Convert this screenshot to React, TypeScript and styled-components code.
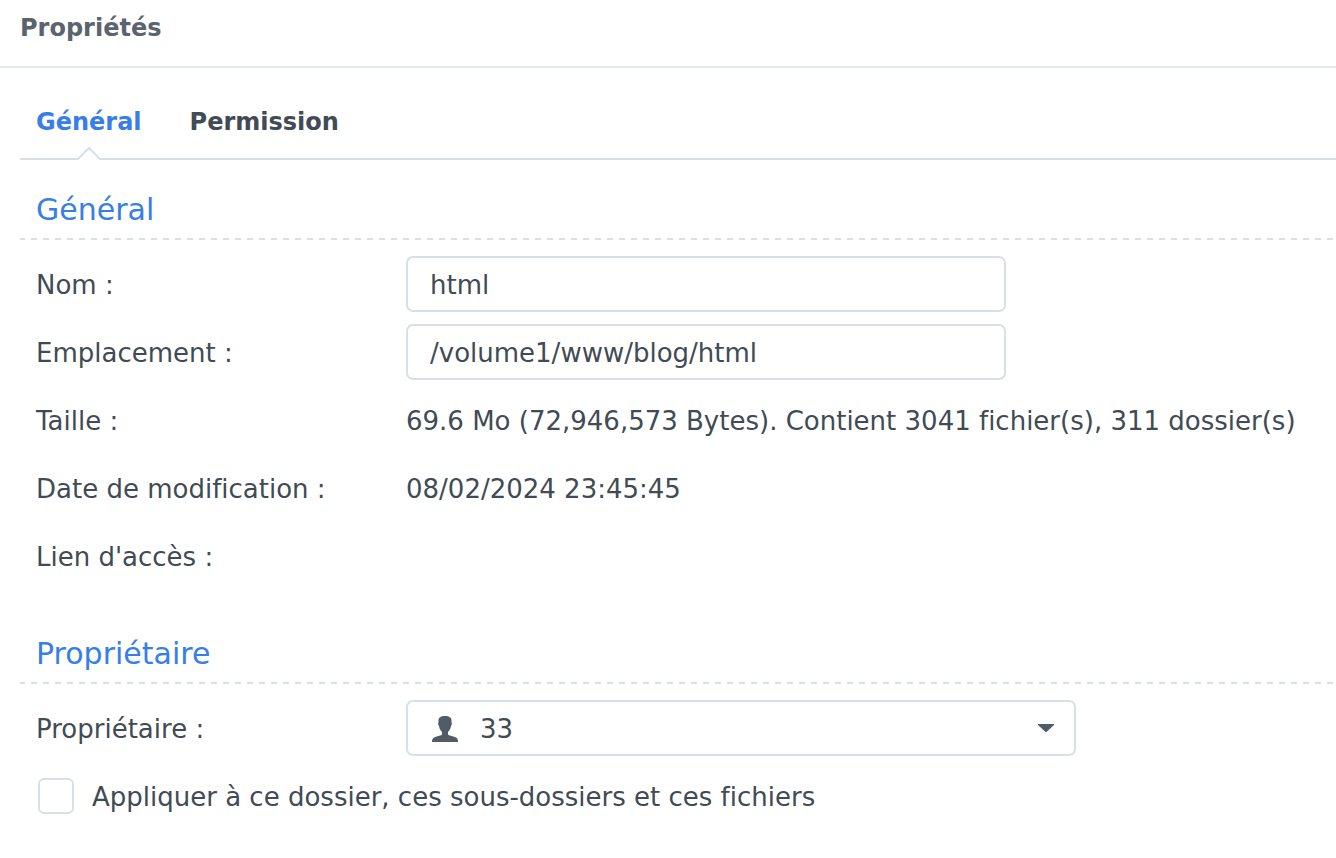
import React, { useState } from 'react';
import styled, { createGlobalStyle } from 'styled-components';

const GlobalStyle = createGlobalStyle`
  *, *::before, *::after { box-sizing: border-box; }
  body {
    margin: 0;
    background: #fff;
    color: #414b55;
    font: 26px/58px Verdana, "DejaVu Sans", sans-serif;
    font-variant-ligatures: none;
    overflow-x: hidden;
  }
`;

const Header = styled.header`
  padding: 8px 20px 18px;
  border-bottom: 2px solid #e3e8ef;
`;

const Title = styled.h1`
  margin: 0;
  font-size: 24px;
  line-height: 40px;
  font-weight: bold;
  color: #5b646e;
`;

const Content = styled.main`
  padding: 24px 0 24px 20px;
`;

const TabBar = styled.div`
  display: flex;
  gap: 48px;
  padding: 0 16px;
  border-bottom: 2px solid #d8dfe9;
`;

const Tab = styled.button<{ $active: boolean }>`
  position: relative;
  display: block;
  padding: 0 0 6px;
  border: 0;
  background: none;
  font: bold 24px/60px Verdana, "DejaVu Sans", sans-serif;
  color: ${({ $active }) => ($active ? '#377ee7' : '#414b55')};
  cursor: pointer;
`;

const Pointer = styled.svg`
  position: absolute;
  left: 50%;
  bottom: -2px;
  width: 26px;
  height: 14px;
  margin-left: -13px;
`;

const Section = styled.section`
  padding-top: 30px;

  & + & { padding-top: 48px; }
`;

const SectionTitle = styled.h2`
  margin: 0 0 16px;
  padding: 0 16px 10px;
  font-size: 30px;
  line-height: 40px;
  font-weight: normal;
  color: #377ee7;
  background: repeating-linear-gradient(to right, #d8dfe9 0 6px, transparent 6px 12px) -1px 100% / 2400px 2px no-repeat;
`;

const Rows = styled.div`
  display: grid;
  gap: 10px;
  padding-left: 16px;
`;

const Row = styled.div`
  display: grid;
  grid-template-columns: 370px minmax(0, 1fr);
  min-height: 58px;
`;

const Value = styled.output`
  display: block;
  white-space: nowrap;
`;

const TextInput = styled.input`
  width: 100%;
  max-width: 600px;
  height: 56px;
  padding: 2px 22px 0;
  border: 2px solid #d8dfe9;
  border-radius: 7px;
  outline: 0;
  background: #fff;
  font: inherit;
  line-height: 50px;
  color: inherit;
`;

const SelectBox = styled.div`
  position: relative;
  max-width: 670px;
  height: 56px;
`;

const Select = styled.select`
  display: block;
  width: 100%;
  height: 56px;
  padding: 2px 60px 0 72px;
  border: 2px solid #d8e1ea;
  border-radius: 7px;
  outline: 0;
  appearance: none;
  background: #fff;
  font: inherit;
  line-height: 50px;
  color: inherit;
`;

const UserIcon = styled.svg`
  position: absolute;
  left: 26px;
  top: 16px;
  pointer-events: none;
`;

const Caret = styled.svg`
  position: absolute;
  right: 22px;
  top: 24px;
  pointer-events: none;
`;

const CheckLabel = styled.label`
  display: flex;
  align-items: flex-start;
  gap: 18px;
  padding-left: 2px;
`;

const Checkbox = styled.input`
  flex: none;
  width: 36px;
  height: 36px;
  margin: 10px 0;
  border: 2px solid #d8dfe9;
  border-radius: 6px;
  appearance: none;
  background: #fff;

  &:checked { background: #377ee7; box-shadow: inset 0 0 0 6px #fff; }
`;

const tabs = ['Général', 'Permission'];

export default function App() {
  const [tab, setTab] = useState(tabs[0]);

  return (
    <>
      <GlobalStyle />
      <Header>
        <Title>Propriétés</Title>
      </Header>
      <Content>
        <TabBar role="tablist">
          {tabs.map((name) => (
            <Tab
              key={name}
              type="button"
              role="tab"
              aria-selected={tab === name}
              $active={tab === name}
              onClick={() => setTab(name)}
            >
              {name}
              {tab === name && (
                <Pointer viewBox="0 0 26 14" aria-hidden="true">
                  <path d="M1 14 13 2 25 14Z" fill="#fff" />
                  <path d="M1 13h1L13 2l11 11h1" fill="none" stroke="#d8dfe9" strokeWidth="2" />
                </Pointer>
              )}
            </Tab>
          ))}
        </TabBar>

        <Section>
          <SectionTitle>Général</SectionTitle>
          <Rows>
            <Row>
              <label htmlFor="name">Nom :</label>
              <TextInput id="name" type="text" defaultValue="html" />
            </Row>
            <Row>
              <label htmlFor="location">Emplacement :</label>
              <TextInput id="location" type="text" readOnly value="/volume1/www/blog/html" />
            </Row>
            <Row>
              <label htmlFor="size">Taille :</label>
              <Value id="size">69.6 Mo (72,946,573 Bytes). Contient 3041 fichier(s), 311 dossier(s)</Value>
            </Row>
            <Row>
              <label htmlFor="modified">Date de modification :</label>
              <Value id="modified">08/02/2024 23:45:45</Value>
            </Row>
            <Row>
              <label htmlFor="link">Lien d'accès :</label>
              <Value id="link" />
            </Row>
          </Rows>
        </Section>

        <Section>
          <SectionTitle>Propriétaire</SectionTitle>
          <Rows>
            <Row>
              <label htmlFor="owner">Propriétaire :</label>
              <SelectBox>
                <Select id="owner" defaultValue="33">
                  <option value="33">33</option>
                </Select>
                <UserIcon width="26" height="26" viewBox="0 0 26 26" fill="#525c66" aria-hidden="true">
                  <path d="M13 0C8.500 0 6.500 1.500 6.500 4.500V6.500C6 6.500 6 7 6.200 8C6.400 9 6.600 9.600 7 10C7.500 13 8.500 14.500 10 16V18.500L9 19.200L3 21C1 21.800 0 22.800 0 26H26C26 22.800 25 21.800 23 21L17 19.200L16 18.500V16C17.500 14.500 18.500 13 19 10C19.400 9.600 19.600 9 19.800 8C20 7 20 6.500 19.500 6.500V4.500C19.500 1.500 17.500 0 13 0Z" />
                </UserIcon>
                <Caret width="16" height="8" viewBox="0 0 16 8" fill="#525c66" aria-hidden="true">
                  <path d="M0 0H16V1L9 7.500Q8 8.500 7 7.500L0 1Z" />
                </Caret>
              </SelectBox>
            </Row>
            <CheckLabel>
              <Checkbox type="checkbox" />
              Appliquer à ce dossier, ces sous-dossiers et ces fichiers
            </CheckLabel>
          </Rows>
        </Section>
      </Content>
    </>
  );
}
